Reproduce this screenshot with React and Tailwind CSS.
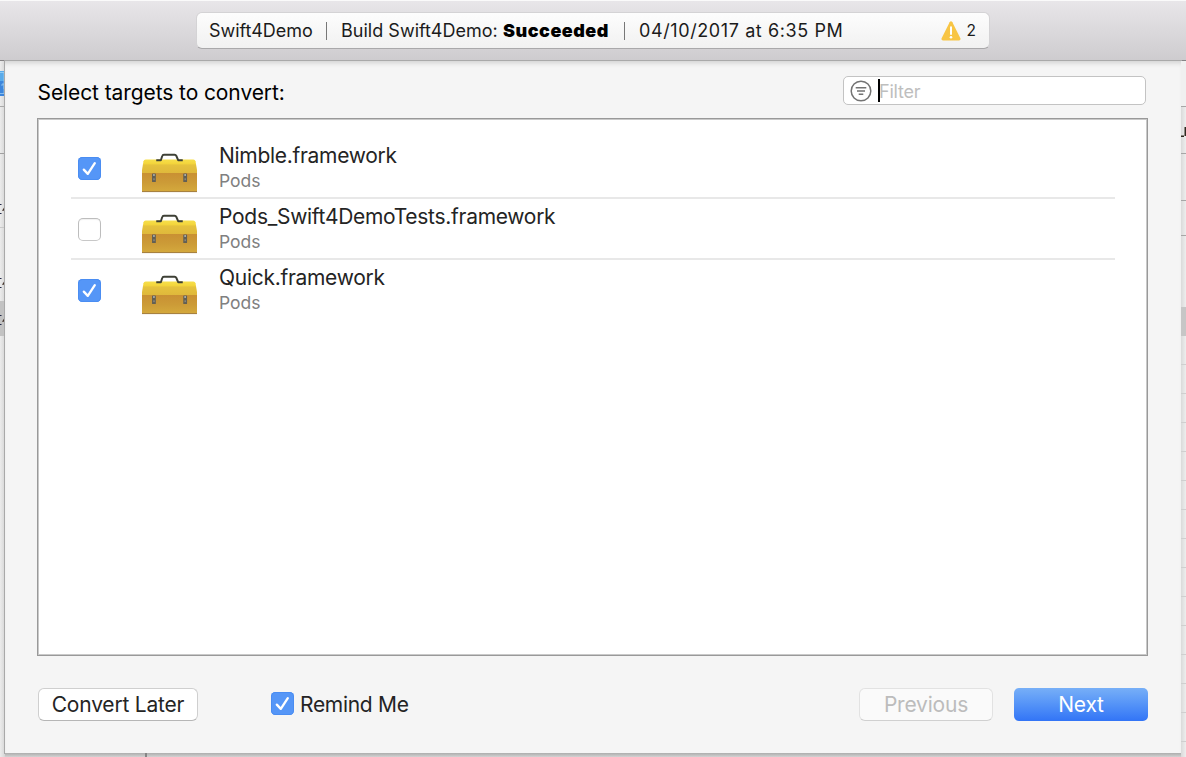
import React from "react";

const targets = [
  { name: "Nimble.framework", checked: true },
  { name: "Pods_Swift4DemoTests.framework", checked: false },
  { name: "Quick.framework", checked: true },
];

function Label({ children, className = "" }) {
  return <span className={`block whitespace-nowrap ${className}`}>{children}</span>;
}

function Checkbox({ checked }) {
  if (!checked) {
    return <span className="block size-[23px] shrink-0 rounded-[5px] border border-[#bdbdbd] border-b-[#c8c8c8] bg-white shadow-[inset_0_1px_1px_rgba(0,0,0,0.06)]" />;
  }
  return (
    <span className="block size-[23px] shrink-0 rounded-[4.5px] bg-[#5596f7] shadow-[inset_0_0_0_1px_#4a8df2]">
      <svg viewBox="0 0 23 23" className="size-[23px]" fill="none">
        <path d="M5.8 12.6 L9.8 16.9 L16.8 6.2" stroke="white" strokeWidth="2.3" strokeLinecap="round" strokeLinejoin="round" />
      </svg>
    </span>
  );
}

function Toolbox() {
  return (
    <svg viewBox="0 0 56 40" preserveAspectRatio="none" className="h-10 w-[55px] shrink-0">
      <defs>
        <linearGradient id="lid" x1="0" y1="0" x2="0" y2="1">
          <stop offset="0" stopColor="#f6df4c" />
          <stop offset="0.28" stopColor="#f4d63c" />
          <stop offset="0.4" stopColor="#e5c23d" />
          <stop offset="1" stopColor="#dfb83b" />
        </linearGradient>
        <linearGradient id="box" x1="0" y1="0" x2="0" y2="1">
          <stop offset="0" stopColor="#c99033" />
          <stop offset="0.5" stopColor="#cc9b37" />
          <stop offset="1" stopColor="#d5aa3d" />
        </linearGradient>
      </defs>
      <path d="M3.7 6.5 H52.3 Q54 6.5 54.5 8.2 L56 17 V20.5 H0 V17 L1.5 8.2 Q2 6.5 3.7 6.5Z" fill="url(#lid)" />
      <path d="M0 20 H56 V39 H0Z" fill="url(#box)" />
      <path d="M0 38.6 H56" stroke="#9c7841" strokeWidth="0.9" />
      <path d="M14.5 7.2 H19.2 L20.6 3 Q21 1.7 22.3 1.7 H33.2 Q34.5 1.7 35 3 L36.8 7.2 H41.5" fill="none" stroke="#3e4036" strokeWidth="2" strokeLinejoin="round" />
      {[10.2, 42].map((x) => (
        <g key={x}>
          <rect x={x} y="20.5" width="3.9" height="8.5" rx="0.6" fill="#625f54" />
          <rect x={x + 1.1} y="21" width="1.7" height="2" fill="#a8aaa4" />
          <rect x={x + 1.3} y="25.3" width="1.4" height="1.8" fill="#8c8b80" />
        </g>
      ))}
    </svg>
  );
}

function EdgeMark() {
  return (
    <svg viewBox="0 0 5 12" className="block h-3 w-[5px]" fill="none">
      <path d="M0 1.5H1.5 M0 10.5H1.5" stroke="#202848" strokeWidth="1.2" />
      <path d="M5 4.5L3.3 7H5" stroke="#46352c" strokeWidth="1.4" />
    </svg>
  );
}

function LeftEdge() {
  return (
    <div className="flex w-[5px] shrink-0 flex-col overflow-hidden bg-linear-to-r from-[#ececec] to-[#d6d6d6]">
      <div className="flex h-[46px] flex-col border-b border-[#a9a9a9] pt-[10px]">
        <svg viewBox="0 0 5 25" className="h-[25px] w-[5px]">
          <rect width="5" height="25" fill="#3d86dc" />
          <rect width="5" height="10" fill="#5aabea" />
          <path d="M0 1.5H4V22.5H0 M2 15V13H4V18" fill="none" stroke="#a8d5f5" strokeWidth="0.7" />
        </svg>
      </div>
      <div className="h-[47px] border-b border-[#a0a0a0]" />
      <div className="h-[74px] border-b border-[#c9c9c9] pt-[49px]"><EdgeMark /></div>
      <div className="h-[73px] pt-[49px]"><EdgeMark /></div>
      <div className="h-[35px] bg-[#c2c2c2] pt-[13px]"><EdgeMark /></div>
    </div>
  );
}

function RightEdge() {
  return (
    <div className="flex w-[5px] shrink-0 flex-col overflow-hidden bg-linear-to-l from-[#eeeeee] to-[#dadada]">
      <div className="h-[46px] border-b border-[#a6a6a6] bg-[#f0f0f0]" />
      <div className="h-[47px] border-b border-[#a6a6a6] pt-[18px]">
        <svg viewBox="0 0 5 13" className="block h-[13px] w-[5px]" fill="none">
          <path d="M4.3 2V11 M0 11.3H3" stroke="#30281f" strokeWidth="1.6" />
        </svg>
      </div>
      <div className="h-[47px] border-b border-[#a6a6a6]" />
      <div className="h-[35px] border-b border-[#a6a6a6]" />
      <div className="h-[71px]" />
      <div className="h-[29px] bg-[#c6c6c6]" />
      {Array.from({ length: 14 }, (_, i) => (
        <div key={i} className="h-[29px] shrink-0 border-b border-[#cfcfcf]" />
      ))}
    </div>
  );
}

function StatusBar() {
  return (
    <header className="flex h-[61px] shrink-0 justify-center border-t border-b border-t-[#fafafa] border-b-[#858385] bg-linear-to-b from-[#e8e6e9] to-[#cecccf] pt-[11px]">
      <div className="flex h-[37px] w-[794px] items-center rounded-[6px] border border-[#d4d3d5] border-b-[#a9a8aa] bg-linear-to-b from-[#fdfdfd] to-[#f1f1f1] pr-[13px] pl-[12px] text-[18px] text-[#1b1b1b]">
        <Label className="w-[105px] tracking-[-0.03px]">Swift4Demo</Label>
        <span className="mr-[14px] ml-[12px] h-[18px] w-px bg-[#777]" />
        <Label className="w-[162px] tracking-[0.02px]">Build Swift4Demo:</Label>
        <Label className="w-[108px] font-black tracking-[0.5px] text-black">Succeeded</Label>
        <span className="mr-[14px] ml-[13px] h-[18px] w-px bg-[#777]" />
        <Label className="tracking-[0.6px]">04/10/2017 at 6:35 PM</Label>
        <svg viewBox="0 0 20 20" className="mr-[6px] ml-auto size-5">
          <path d="M8.6 1.3 Q10 -0.6 11.4 1.3 L19.4 17.2 Q20 19.4 18 19.4 H2 Q0 19.4 0.6 17.2Z" fill="#f8c544" />
          <path d="M10 6.2V13" stroke="white" strokeWidth="2" strokeLinecap="round" />
          <circle cx="10" cy="16.2" r="1.3" fill="white" />
        </svg>
        <Label className="text-[15.5px]">2</Label>
      </div>
    </header>
  );
}

export default function App() {
  return (
    <div className="flex h-[757px] w-[1186px] flex-col overflow-hidden bg-[#e5e5e5] font-['Inter',sans-serif] text-[#242424]">
      <StatusBar />
      <div className="flex min-h-0 flex-1">
        <LeftEdge />
        <div className="flex flex-1 flex-col">
          <main className="flex h-[692px] flex-col bg-[#f5f5f5] pr-[33px] pl-[32px] shadow-[0_0_0_1px_#a9a9a9,inset_0_5px_5px_-3px_rgba(0,0,0,0.15)]">
            <div className="flex h-[57px] items-start justify-between">
              <Label className="mt-[18px] ml-[0.5px] text-[21px] leading-[28px] tracking-[-0.09px] text-black">Select targets to convert:</Label>
              <div className="mt-[15px] mr-[2px] flex h-[29px] w-[303px] items-center rounded-[5px] border border-[#c3c3c3] bg-white pl-[6px]">
                <svg viewBox="0 0 22 22" className="size-[22px]" fill="none" stroke="#737373" strokeWidth="1.5">
                  <circle cx="11" cy="11" r="9.8" />
                  <path d="M5.7 7.8H16.3 M7 11H15 M8.7 14.2H13.3" />
                </svg>
                <span className="ml-[6px] h-[23px] w-[2px] bg-black" />
                <Label className="-ml-px pt-px text-[18px] tracking-[-0.2px] text-[#bebebe]">Filter</Label>
              </div>
            </div>
            <section className="h-[538px] w-[1111px] border border-[#999] bg-white pt-[19px] pr-[32px] pl-[33px] shadow-[inset_0_0_0_1px_#c9c9c9]">
              {targets.map((target, i) => (
                <div key={target.name} className={`flex h-[61px] items-start pl-[6px] ${i < 2 ? "border-b-2 border-[#e8e8e8]" : ""}`}>
                  <div className="mt-[19px] ml-[0.5px]"><Checkbox checked={target.checked} /></div>
                  <div className="mt-[14.5px] ml-[41.5px]"><Toolbox /></div>
                  <div className="ml-[22px] pt-[5px]">
                    <Label className="text-[21px] leading-[26px] tracking-[-0.29px]">{target.name}</Label>
                    <Label className="text-[17.5px] leading-[24px] text-[#808080]">Pods</Label>
                  </div>
                </div>
              ))}
            </section>
            <footer className="flex items-center pt-[32px]">
              <button className="ml-px h-[33px] w-[160px] rounded-[6px] border border-[#cfcfcf] border-b-[#b6b6b6] bg-white text-[21px] leading-[30px] tracking-[-0.2px] whitespace-nowrap">Convert Later</button>
              <label className="ml-[73px] flex items-center gap-[6px] text-[21px] tracking-[-0.3px]">
                <span className="-mt-[2px]"><Checkbox checked /></span>
                <Label>Remind Me</Label>
              </label>
              <button className="ml-auto h-[33px] w-[134px] rounded-[6px] border border-[#e2e2e2] border-b-[#d0d0d0] bg-[#fafafa] text-[21px] leading-[30px] tracking-[-0.2px] text-[#bcbcbc]">Previous</button>
              <button className="ml-[21px] h-[33px] w-[134px] rounded-[5px] bg-linear-to-b from-[#77aff7] to-[#3274f6] text-[21px] leading-[30px] tracking-[-0.2px] text-white">Next</button>
            </footer>
          </main>
          <div className="flex h-[4px] bg-linear-to-b from-[#adadad] to-[#d2d2d2]">
            <span className="ml-[140px] w-[2px] bg-[#858585]" />
          </div>
        </div>
        <RightEdge />
      </div>
    </div>
  );
}
